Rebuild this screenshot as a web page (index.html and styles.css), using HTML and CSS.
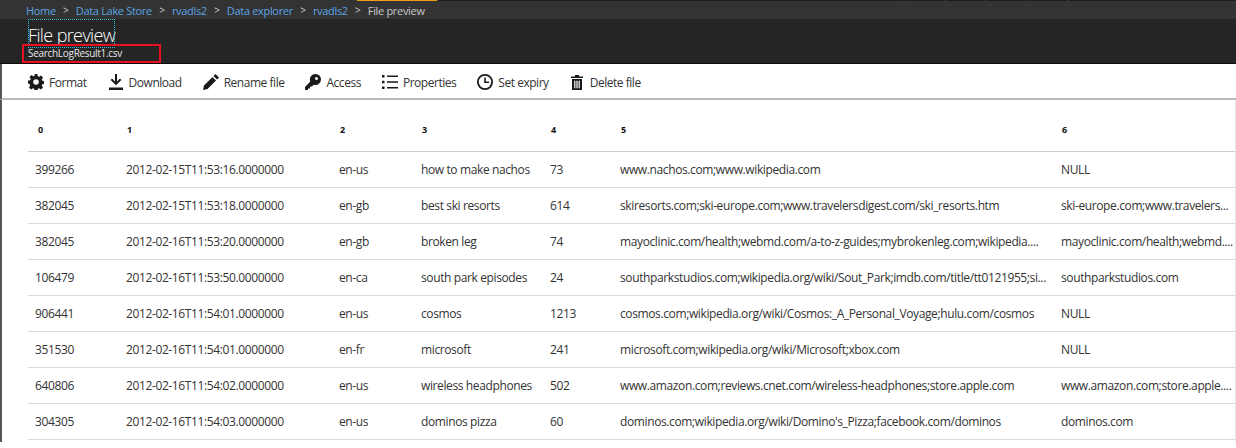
FILE: index.html
```html
<!DOCTYPE html>
<html lang="en">
<head>
<meta charset="utf-8">
<title>File preview</title>
<link rel="stylesheet" href="styles.css">
</head>
<body>
<div class="topstrip">
  <div class="tab-a"></div><div class="tab-orange"></div><div class="tab-b"></div>
  <div class="tab-c"></div><div class="tab-c"></div><div class="tab-c"></div><div class="tab-c"></div><div class="tab-d"></div>
</div>
<nav class="crumbs">
  <a>Home</a><span class="sep">&gt;</span>
  <a>Data Lake Store</a><span class="sep">&gt;</span>
  <a>rvadls2</a><span class="sep">&gt;</span>
  <a>Data explorer</a><span class="sep">&gt;</span>
  <a>rvadls2</a><span class="sep">&gt;</span>
  <span class="current">File preview</span>
</nav>
<header class="blade">
  <h1 class="title">File preview</h1>
  <div class="subtitle">SearchLogResult1.csv<span class="redbox"></span></div>
</header>
<div class="toolbar">
  <button class="cmd">
    <svg class="ic" viewBox="0 0 16 16"><path d="M6.6 0h2.8l.4 2.2 1.3.5L13 1.500l2 2-1.200 1.900.5 1.300 2.200.4v2.800l-2.200.4-.5 1.300 1.200 1.900-2 2-1.900-1.200-1.300.5-.4 2.200H6.600l-.4-2.200-1.300-.5L3 15.500l-2-2 1.200-1.900-.5-1.300L0 9.400V6.600l2.200-.4.5-1.300L1.500 3l2-2 1.900 1.200 1.300-.5z M8 5.200a2.800 2.800 0 1 0 0 5.600 2.800 2.800 0 0 0 0-5.600z" fill-rule="evenodd"/></svg>
    Format</button>
  <button class="cmd">
    <svg class="ic" viewBox="0 0 16 16"><path d="M7 0h2v7.500l3-3 1.400 1.400L8 11.300 2.600 5.900 4 4.500l3 3z M1 13.500h14V16H1z"/></svg>
    Download</button>
  <button class="cmd">
    <svg class="ic" viewBox="0 0 16 16"><path d="M12.500 0 16 3.500l-2 2L10.500 2z M9.500 3 13 6.500 4.500 15 0 16l1-4.500z"/></svg>
    Rename file</button>
  <button class="cmd">
    <svg class="ic" viewBox="0 0 16 16"><path d="M10.500 0A5.500 5.500 0 0 1 16 5.500a5.500 5.500 0 0 1-7.300 5.200L7 12.500H5V14.500H3V16H0v-3l5.300-5.500A5.500 5.500 0 0 1 10.500 0z M11.500 3a1.500 1.500 0 1 0 0 3 1.500 1.500 0 0 0 0-3z" fill-rule="evenodd"/></svg>
    Access</button>
  <button class="cmd">
    <svg class="ic" viewBox="0 0 16 16"><path d="M0 1h2.500v2.500H0z M5 1.500h11v1.600H5z M0 6.800h2.500v2.500H0z M5 7.200h11v1.600H5z M0 12.500h2.500V15H0z M5 13h11v1.600H5z"/></svg>
    Properties</button>
  <button class="cmd">
    <svg class="ic" viewBox="0 0 16 16"><path d="M8 0a8 8 0 1 1 0 16A8 8 0 0 1 8 0z M8 1.800a6.200 6.200 0 1 0 0 12.400A6.200 6.200 0 0 0 8 1.800z M7.200 3.500h1.600V7.500H12v1.600H7.200z" fill-rule="evenodd"/></svg>
    Set expiry</button>
  <button class="cmd cmd-delete">
    <svg class="ic ic-trash" viewBox="0 0 14 16"><path d="M5 1h4v1.500h4V4H1V2.500h4z M2 5h10v11H2z M4.200 6.800v7.400h1.200V6.800z M6.400 6.800v7.400h1.200V6.800z M8.600 6.800v7.400h1.200V6.800z" fill-rule="evenodd"/></svg>
    Delete file</button>
</div>
<main class="content">
  <table class="grid">
    <colgroup>
      <col class="c0"><col class="c1"><col class="c2"><col class="c3"><col class="c4"><col class="c5"><col class="c6">
    </colgroup>
    <thead>
      <tr><th>0</th><th>1</th><th>2</th><th>3</th><th>4</th><th>5</th><th>6</th></tr>
    </thead>
    <tbody>
      <tr><td>399266</td><td>2012-02-15T11:53:16.0000000</td><td>en-us</td><td>how to make nachos</td><td>73</td><td>www.nachos.com;www.wikipedia.com</td><td>NULL</td></tr>
      <tr><td>382045</td><td>2012-02-15T11:53:18.0000000</td><td>en-gb</td><td>best ski resorts</td><td>614</td><td>skiresorts.com;ski-europe.com;www.travelersdigest.com/ski_resorts.htm</td><td>ski-europe.com;www.travelers...</td></tr>
      <tr><td>382045</td><td>2012-02-16T11:53:20.0000000</td><td>en-gb</td><td>broken leg</td><td>74</td><td>mayoclinic.com/health;webmd.com/a-to-z-guides;mybrokenleg.com;wikipedia....</td><td>mayoclinic.com/health;webmd....</td></tr>
      <tr><td>106479</td><td>2012-02-16T11:53:50.0000000</td><td>en-ca</td><td>south park episodes</td><td>24</td><td>southparkstudios.com;wikipedia.org/wiki/Sout_Park;imdb.com/title/tt0121955;si...</td><td>southparkstudios.com</td></tr>
      <tr><td>906441</td><td>2012-02-16T11:54:01.0000000</td><td>en-us</td><td>cosmos</td><td>1213</td><td>cosmos.com;wikipedia.org/wiki/Cosmos:_A_Personal_Voyage;hulu.com/cosmos</td><td>NULL</td></tr>
      <tr><td>351530</td><td>2012-02-16T11:54:01.0000000</td><td>en-fr</td><td>microsoft</td><td>241</td><td>microsoft.com;wikipedia.org/wiki/Microsoft;xbox.com</td><td>NULL</td></tr>
      <tr><td>640806</td><td>2012-02-16T11:54:02.0000000</td><td>en-us</td><td>wireless headphones</td><td>502</td><td>www.amazon.com;reviews.cnet.com/wireless-headphones;store.apple.com</td><td>www.amazon.com;store.apple....</td></tr>
      <tr><td>304305</td><td>2012-02-16T11:54:03.0000000</td><td>en-us</td><td>dominos pizza</td><td>60</td><td>dominos.com;wikipedia.org/wiki/Domino's_Pizza;facebook.com/dominos</td><td>dominos.com</td></tr>
    </tbody>
  </table>
</main>
</body>
</html>
```
FILE: styles.css
```css
* { box-sizing: border-box; }
html, body { margin: 0; padding: 0; }
body {
  width: 1236px;
  height: 448px;
  overflow: hidden;
  background: #fff;
  color: #333;
  font-family: "Open Sans", "Noto Sans", "Liberation Sans", sans-serif;
  font-size: 12px;
}
.topstrip { display: flex; height: 1px; background: #333; gap: 2px; }
.tab-a { width: 356px; background: #333; }
.tab-orange { width: 80px; margin-left: -1px; background: #f29a1d; }
.tab-b { width: 464px; background: #1c1c1c; }
.tab-c { width: 39px; background: #1c1c1c; }
.tab-d { flex: 1; background: #1c1c1c; }

.crumbs {
  display: flex;
  align-items: center;
  height: 18px;
  padding-left: 26px;
  background: #333;
  font-size: 11px;
  letter-spacing: -0.32px;
  white-space: nowrap;
}
.crumbs a { color: #5aa5e6; }
.crumbs .sep { width: 20px; text-align: center; color: #d0d0d0; font-size: 10px; }
.crumbs .current { color: #c8c8c8; }

.blade {
  position: relative;
  height: 45px;
  padding-left: 28px;
  background: #252525;
  border-bottom: 1px solid #0c0c0c;
  color: #fff;
}
.title {
  display: inline-block;
  margin: 0;
  height: 29px;
  padding-top: 3px;
  outline: 1px dotted #29c5e0;
  outline-offset: -1px;
  font-size: 18px;
  font-weight: 300;
  line-height: 26px;
  letter-spacing: -0.62px;
  white-space: nowrap;
}
.subtitle {
  position: relative;
  margin-top: -2px;
  font-size: 10px;
  line-height: 14px;
  letter-spacing: -0.3px;
  color: #e8e8e8;
}
.redbox {
  position: absolute;
  left: -6px;
  top: -2px;
  width: 139px;
  height: 19px;
  border: 2px solid #e81123;
}

.toolbar {
  display: flex;
  align-items: center;
  gap: 21px;
  height: 36px;
  padding: 2px 0 0 26px;
  border-bottom: 2px solid #b9b9b9;
  border-left: 2px solid #555;
}
.cmd {
  display: flex;
  align-items: center;
  gap: 5px;
  padding: 0;
  border: 0;
  background: none;
  color: #333;
  font: inherit;
  letter-spacing: -0.47px;
  white-space: nowrap;
}
.cmd-delete { gap: 6px; }
.ic { width: 16px; height: 16px; fill: #1a1a1a; flex: none; }
.ic-trash { width: 14px; }

.content {
  height: 342px;
  border-left: 2px solid #555;
  border-right: 1px solid #e6e6e6;
  padding-left: 26px;
}
.grid {
  table-layout: fixed;
  width: 1207px;
  border-collapse: collapse;
}
.c0 { width: 98px; } .c1 { width: 213px; } .c2 { width: 82px; } .c3 { width: 129px; }
.c4 { width: 70px; } .c5 { width: 441px; } .c6 { width: 174px; }
.grid th {
  height: 51px;
  padding: 9px 0 0 1px;
  text-align: left;
  font-size: 9px;
  font-weight: 700;
  color: #111;
  border-bottom: 1px solid #ccc;
}
.grid th:first-child { padding-left: 10px; }
.grid td {
  height: 36px;
  padding: 0;
  border-bottom: 1px solid #d9d9d9;
  letter-spacing: -0.38px;
  white-space: nowrap;
  overflow: hidden;
}
.grid td:first-child { padding-left: 7px; }
```
